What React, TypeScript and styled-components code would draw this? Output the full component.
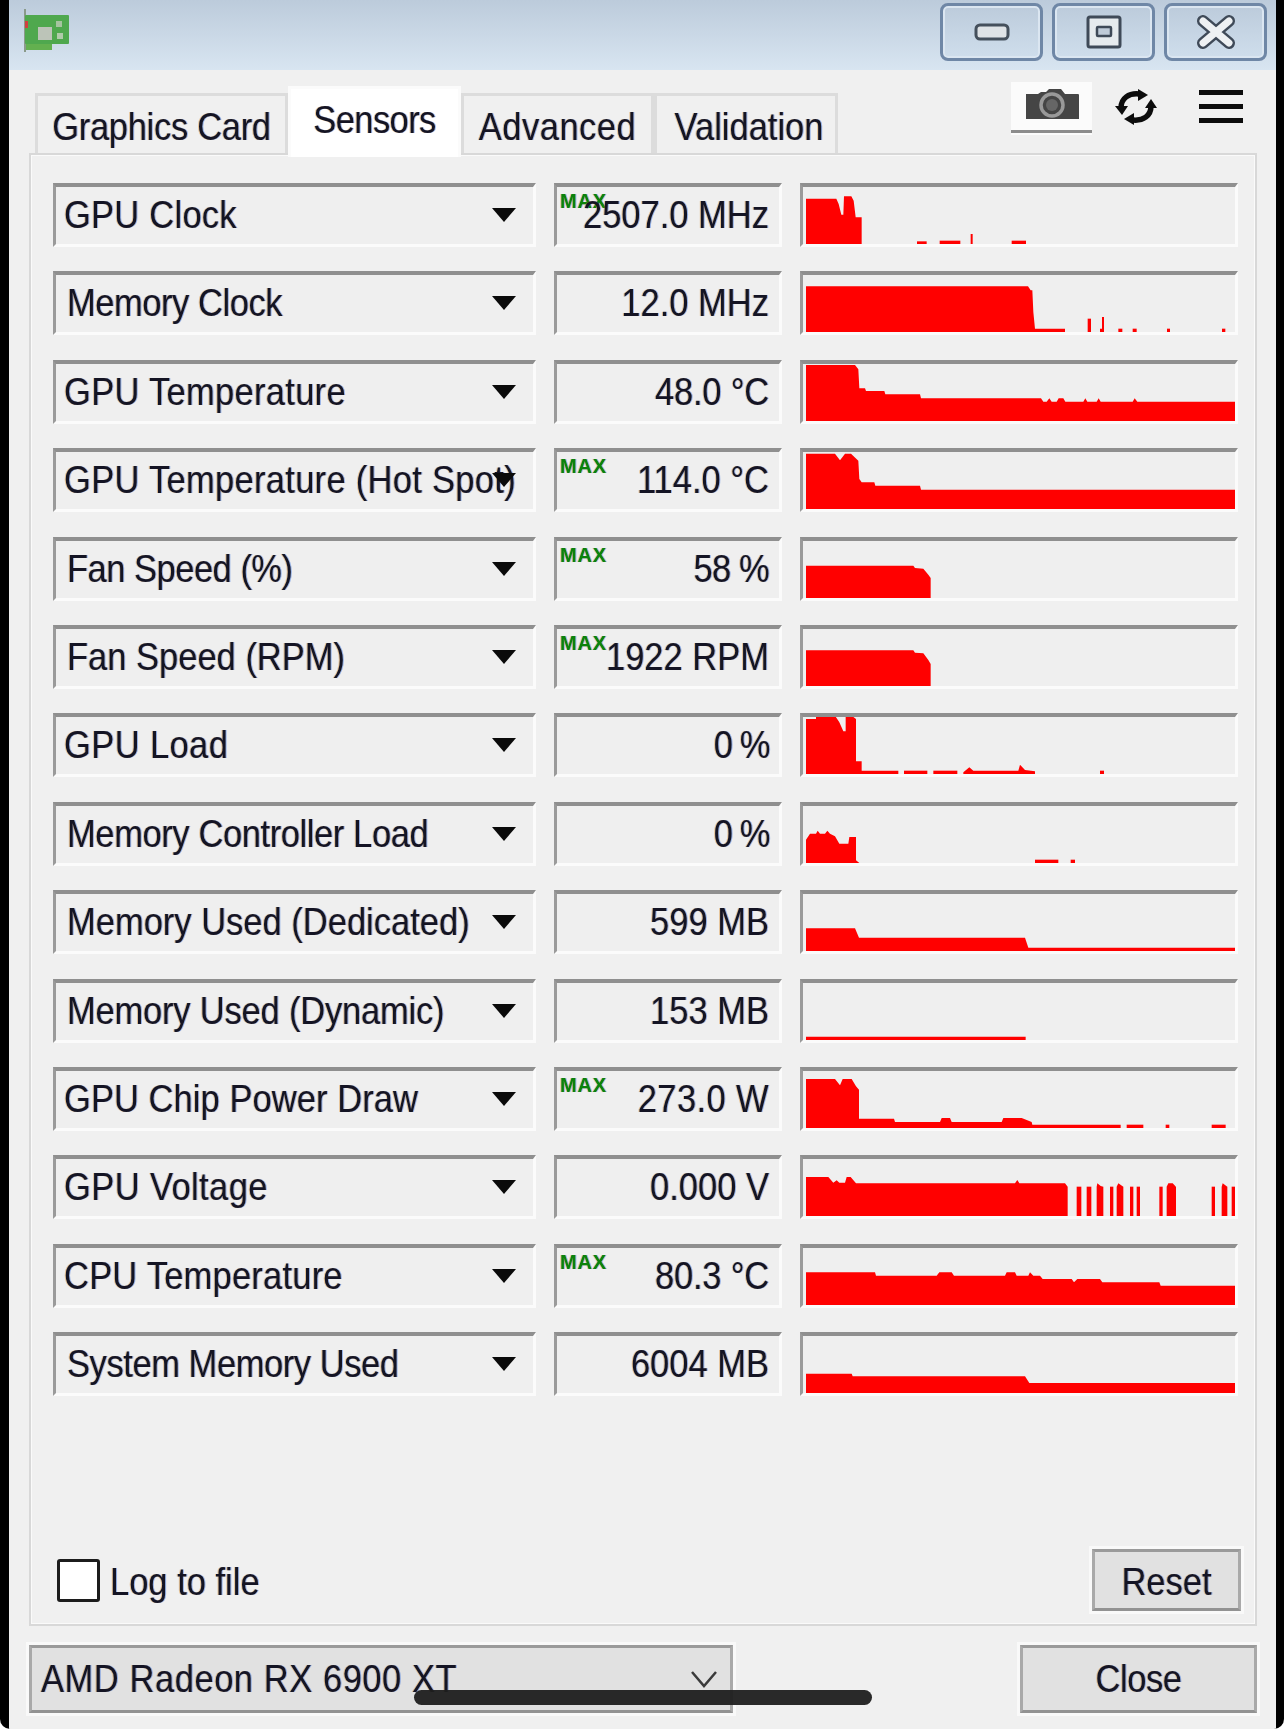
import React from 'react';
import styled, { createGlobalStyle, css } from 'styled-components';

const GlobalStyle = createGlobalStyle`
  html, body {
    margin: 0;
    padding: 0;
    background: #fff;
  }
`;

const uiText = css`
  font-family: "Liberation Sans", Arial, sans-serif;
  font-size: 34.5px;
  color: #141424;
  text-shadow: -1px 0 rgba(215, 130, 20, 0.4), 1px 0 rgba(20, 90, 220, 0.4);
  white-space: nowrap;
`;

const Page = styled.div`
  position: relative;
  height: 1729px;
  display: flex;
  padding: 0 8px 0 9px;
  background: #000;
  border-radius: 0 0 10px 10px;
  overflow: hidden;
`;

const Window = styled.div`
  width: 1267px;
  display: flex;
  flex-direction: column;
  background: #f0f0f0;
  filter: blur(0.7px);
`;

const TitleBar = styled.div`
  height: 70px;
  flex: none;
  display: flex;
  justify-content: space-between;
  align-items: flex-start;
  padding: 3px 9px 0 13px;
  box-sizing: border-box;
  background: linear-gradient(#bccbdb, #d8e5f1);
`;

const AppIcon = styled.svg`
  width: 50px;
  height: 46px;
  margin-top: 5px;
`;

const WindowButtons = styled.div`
  display: flex;
  gap: 9px;
`;

const WindowButton = styled.div`
  width: 103px;
  height: 58px;
  box-sizing: border-box;
  display: flex;
  align-items: center;
  justify-content: center;
  border: 3px solid #6f87a6;
  border-radius: 8px;
  box-shadow: inset 0 0 0 2px #dbe6f1;
  background: linear-gradient(#bccbdb, #cfdeec);
`;

const Body = styled.div`
  flex: 1;
  display: flex;
  flex-direction: column;
  padding: 0 19px 0 20px;
`;

const TabRow = styled.div`
  height: 83px;
  flex: none;
  display: flex;
  align-items: flex-end;
  padding: 0 14px 0 6px;
`;

const Tab = styled.div<{ $active?: boolean; $width: number; $shift?: number }>`
  ${uiText}
  width: ${p => p.$width}px;
  box-sizing: border-box;
  display: flex;
  justify-content: center;
  position: relative;
  border: 3px solid ${p => (p.$active ? '#fbfbfb' : '#dcdcdc')};
  border-bottom: none;
  background: ${p => (p.$active ? '#fff' : '#f0f0f0')};
  height: ${p => (p.$active ? 71 : 60)}px;
  margin-bottom: ${p => (p.$active ? -4 : 0)}px;
  padding-top: ${p => (p.$active ? 12 : 11)}px;
  padding-left: ${p => p.$shift ?? 0}px;
  z-index: ${p => (p.$active ? 2 : 1)};
`;

const TabLabel = styled.span<{ $track?: number }>`
  display: inline-block;
  line-height: 40px;
  letter-spacing: ${p => p.$track ?? 0}px;
  transform: scaleY(1.1);
`;

const Toolbar = styled.div`
  margin-left: auto;
  align-self: flex-start;
  display: flex;
  align-items: flex-start;
  margin-top: 12px;
`;

const CameraButton = styled.div`
  width: 81px;
  height: 51px;
  box-sizing: border-box;
  display: flex;
  align-items: center;
  justify-content: center;
  padding-bottom: 4px;
  background: #fbfbfb;
  border-bottom: 3px solid #8c8c8c;
  box-shadow: 0 2px 0 #fbfbfb;
`;

const RefreshIcon = styled.svg`
  width: 44px;
  height: 36px;
  margin: 7px 0 0 22px;
`;

const MenuIcon = styled.div`
  width: 44px;
  height: 33px;
  margin: 8px 0 0 41px;
  display: flex;
  flex-direction: column;
  justify-content: space-between;
`;

const MenuLine = styled.div`
  height: 5px;
  background: #0c0c0c;
`;

const Panel = styled.div`
  flex: none;
  height: 1473px;
  box-sizing: border-box;
  display: flex;
  flex-direction: column;
  padding: 28px 14px 13px 22px;
  border: 2px solid #d8d8d8;
  box-shadow: inset 0 0 0 1px #fafafa;
`;

const SensorList = styled.div`
  display: flex;
  flex-direction: column;
  gap: 24.4px;
`;

const SensorRow = styled.div`
  display: grid;
  grid-template-columns: 483px 228px 438px;
  column-gap: 18px;
  height: 64px;
`;

const SunkenBox = styled.div`
  position: relative;
  box-sizing: border-box;
  height: 64px;
  border-top: 4px solid #8f8f8f;
  border-left: 3px solid #9a9a9a;
  border-right: 3px solid #fbfbfb;
  border-bottom: 3px solid #fbfbfb;
  background: #efefef;
`;

const SensorSelect = styled(SunkenBox)<{ $inset: number }>`
  ${uiText}
  display: flex;
  align-items: center;
  padding-left: ${p => p.$inset}px;
`;

const ScaledText = styled.span<{ $track?: number }>`
  display: inline-block;
  letter-spacing: ${p => p.$track ?? 0}px;
  transform: scaleY(1.1);
  transform-origin: center;
`;

const LogLabel = styled(ScaledText)`
  margin-top: 4px;
`;

const DropArrow = styled.div`
  position: absolute;
  right: 17px;
  top: 21px;
  width: 0;
  height: 0;
  border-left: 12px solid transparent;
  border-right: 12px solid transparent;
  border-top: 14px solid #0a0a0a;
`;

const ValueBox = styled(SunkenBox)`
  ${uiText}
  display: flex;
  align-items: center;
  justify-content: flex-end;
  padding-right: 10px;
`;

const MaxBadge = styled.span`
  position: absolute;
  left: 3px;
  top: 4px;
  font-family: "Liberation Sans", Arial, sans-serif;
  font-size: 20px;
  font-weight: bold;
  letter-spacing: 0.8px;
  line-height: 20px;
  color: #0b820b;
`;

const GraphBox = styled(SunkenBox)`
  padding-left: 3px;
  overflow: hidden;
`;

const GraphSvg = styled.svg`
  display: block;
  position: absolute;
  left: 3px;
  bottom: 0;
  width: 429px;
  height: 60px;
`;

const PanelFooter = styled.div`
  margin-top: auto;
  display: flex;
  justify-content: space-between;
  align-items: center;
  padding-left: 4px;
`;

const LogOption = styled.label`
  ${uiText}
  display: flex;
  align-items: center;
  gap: 10px;
  padding-top: 1px;
`;

const CheckBox = styled.div`
  width: 43px;
  height: 43px;
  box-sizing: border-box;
  background: #fff;
  border: 3px solid #1c1c1c;
  border-radius: 3px;
`;

const PushButton = styled.div<{ $width: number; $height: number; $textDrop?: number }>`
  ${uiText}
  width: ${p => p.$width}px;
  height: ${p => p.$height}px;
  box-sizing: border-box;
  display: flex;
  align-items: center;
  justify-content: center;
  padding-top: ${p => p.$textDrop ?? 0}px;
  background: #e1e1e1;
  border: 3px solid #a9a9a9;
  border-top-color: #9a9a9a;
  border-bottom-color: #929292;
  box-shadow: 0 0 0 3px #f9f9f9;
`;

const BottomRow = styled.div`
  flex: none;
  display: flex;
  justify-content: space-between;
  margin-top: 19px;
`;

const CardSelect = styled.div`
  ${uiText}
  width: 704px;
  height: 68px;
  box-sizing: border-box;
  display: flex;
  align-items: center;
  justify-content: space-between;
  padding: 0 12px 0 9px;
  background: #e1e1e1;
  border: 3px solid #a9a9a9;
  border-top-color: #9a9a9a;
  border-bottom-color: #929292;
  box-shadow: 0 0 0 3px #f9f9f9;
`;

const HomeIndicator = styled.div`
  position: absolute;
  left: 414px;
  top: 1690px;
  width: 458px;
  height: 15px;
  border-radius: 8px;
  background: rgba(30, 30, 30, 0.95);
`;

// graph shapes: [x, height] pairs traced off the reference at 3x, x starts at 78
type Segment = [number, number][];

const GRAPHS: Record<string, Segment[]> = {
  gpuClock: [
    [[78, 136], [169, 136], [176, 120], [184, 88], [190, 88], [192, 143], [214, 143], [221, 130], [227, 80], [245, 80]],
    [[411, 8], [440, 8]],
    [[479, 10], [541, 10]],
    [[572, 30], [578, 30]],
    [[695, 10], [738, 10]],
  ],
  memClock: [
    [[78, 137], [744, 137], [752, 125], [757, 125], [760, 60], [765, 10], [855, 10]],
    [[923, 40], [933, 40]],
    [[960, 10], [966, 10], [966, 45], [972, 45]],
    [[1015, 10], [1027, 10]],
    [[1058, 10], [1070, 10]],
    [[1161, 10], [1170, 10]],
    [[1326, 10], [1336, 10]],
  ],
  gpuTemp: [
    [[78, 168], [225, 168], [235, 155], [238, 98], [255, 98], [258, 90], [313, 90], [316, 80], [420, 80], [423, 68], [783, 68], [790, 58], [800, 58], [808, 68], [815, 58], [830, 58], [836, 68], [850, 68], [856, 58], [910, 58], [916, 68], [922, 58], [950, 58], [956, 68], [962, 58], [1058, 58], [1064, 68], [1072, 58], [1365, 58]],
  ],
  hotSpot: [
    [[78, 166], [165, 166], [180, 146], [195, 166], [213, 166], [235, 145], [238, 90], [245, 80], [283, 80], [286, 70], [420, 70], [423, 58], [1365, 58]],
  ],
  fanPct: [
    [[78, 97], [400, 97], [405, 90], [430, 88], [445, 70], [452, 60], [452, 0]],
  ],
  fanRpm: [
    [[78, 107], [400, 107], [405, 100], [430, 98], [445, 78], [452, 66], [452, 0]],
  ],
  gpuLoad: [
    [[78, 165], [108, 165], [108, 175], [165, 175], [178, 155], [190, 128], [197, 128], [197, 175], [215, 175], [228, 165], [228, 38], [245, 38], [245, 10], [355, 10]],
    [[372, 10], [442, 10]],
    [[460, 10], [532, 10]],
    [[550, 5], [568, 20], [580, 10], [715, 10], [720, 28], [735, 12], [765, 8]],
    [[960, 10], [972, 10]],
  ],
  memLoad: [
    [[78, 70], [90, 88], [108, 88], [113, 97], [120, 88], [135, 88], [142, 97], [150, 88], [165, 80], [178, 58], [205, 58], [208, 78], [228, 78], [228, 8], [238, 0]],
    [[765, 10], [835, 10]],
    [[872, 10], [885, 10]],
  ],
  memDedicated: [
    [[78, 68], [225, 68], [237, 40], [735, 40], [745, 10], [1365, 10]],
  ],
  memDynamic: [
    [[78, 10], [737, 10]],
  ],
  chipPower: [
    [[78, 147], [165, 147], [180, 128], [188, 147], [215, 147], [228, 125], [237, 115], [237, 28], [342, 28], [345, 18], [480, 18], [485, 30], [510, 30], [515, 18], [665, 18], [670, 30], [725, 30], [755, 18], [757, 10], [1022, 10]],
    [[1040, 10], [1090, 10]],
    [[1157, 10], [1168, 10]],
    [[1295, 10], [1337, 10]],
  ],
  voltage: [
    [[78, 117], [145, 117], [160, 100], [170, 107], [178, 100], [195, 100], [200, 117], [212, 117], [228, 98], [705, 98], [712, 108], [718, 98], [855, 98], [863, 88], [863, 0]],
    [[890, 88], [904, 88]],
    [[920, 88], [934, 88]],
    [[950, 88], [952, 98], [962, 90], [970, 88]],
    [[990, 88], [1000, 88]],
    [[1010, 88], [1015, 98], [1030, 88]],
    [[1050, 88], [1060, 88]],
    [[1070, 88], [1080, 88]],
    [[1138, 88], [1148, 88]],
    [[1160, 88], [1165, 98], [1178, 98], [1188, 88]],
    [[1295, 88], [1305, 88]],
    [[1325, 88], [1328, 98], [1342, 88]],
    [[1355, 88], [1365, 88]],
  ],
  cpuTemp: [
    [[78, 98], [285, 98], [288, 88], [470, 88], [478, 98], [515, 98], [522, 88], [675, 88], [680, 98], [705, 98], [710, 88], [745, 88], [750, 98], [760, 88], [780, 88], [788, 78], [875, 78], [882, 68], [892, 78], [960, 78], [967, 68], [1138, 68], [1142, 58], [1365, 58]],
  ],
  sysMem: [
    [[78, 58], [215, 58], [218, 50], [735, 50], [748, 30], [1365, 30]],
  ],
};

const SENSORS = [
  { name: 'GPU Clock', inset: 8, track: 0.25, value: '2507.0 MHz', valueTrack: 0, max: true, graph: 'gpuClock' },
  { name: 'Memory Clock', inset: 11, track: -0.45, value: '12.0 MHz', valueTrack: 0, max: false, graph: 'memClock' },
  { name: 'GPU Temperature', inset: 8, track: 0.3, value: '48.0 °C', valueTrack: -0.2, max: false, graph: 'gpuTemp' },
  { name: 'GPU Temperature (Hot Spot)', inset: 8, track: 0.3, value: '114.0 °C', valueTrack: 0, max: true, graph: 'hotSpot' },
  { name: 'Fan Speed (%)', inset: 11, track: -0.5, value: '58 %', valueTrack: -0.8, max: true, graph: 'fanPct' },
  { name: 'Fan Speed (RPM)', inset: 11, track: 0, value: '1922 RPM', valueTrack: 0, max: true, graph: 'fanRpm' },
  { name: 'GPU Load', inset: 8, track: 0.4, value: '0 %', valueTrack: -1.4, max: false, graph: 'gpuLoad' },
  { name: 'Memory Controller Load', inset: 11, track: -0.4, value: '0 %', valueTrack: -1.4, max: false, graph: 'memLoad' },
  { name: 'Memory Used (Dedicated)', inset: 11, track: 0, value: '599 MB', valueTrack: 0, max: false, graph: 'memDedicated' },
  { name: 'Memory Used (Dynamic)', inset: 11, track: -0.2, value: '153 MB', valueTrack: 0, max: false, graph: 'memDynamic' },
  { name: 'GPU Chip Power Draw', inset: 8, track: 0.06, value: '273.0 W', valueTrack: 0.4, max: true, graph: 'chipPower' },
  { name: 'GPU Voltage', inset: 8, track: 0.4, value: '0.000 V', valueTrack: 0, max: false, graph: 'voltage' },
  { name: 'CPU Temperature', inset: 8, track: 0.22, value: '80.3 °C', valueTrack: -0.2, max: true, graph: 'cpuTemp' },
  { name: 'System Memory Used', inset: 11, track: -0.43, value: '6004 MB', valueTrack: 0, max: false, graph: 'sysMem' },
];

const segmentPath = (seg: Segment) => {
  const first = seg[0];
  const last = seg[seg.length - 1];
  const line = seg.map(([x, h]) => `L${x} ${180 - h}`).join(' ');
  return `M${first[0]} 180 ${line} L${last[0]} 180 Z`;
};

const SensorGraph: React.FC<{ name: string }> = ({ name }) => (
  <GraphSvg viewBox="78 0 1287 180" preserveAspectRatio="none">
    {GRAPHS[name].map((seg, i) => (
      <path key={i} d={segmentPath(seg)} fill="#ff0000" />
    ))}
  </GraphSvg>
);

const App: React.FC = () => (
  <>
    <GlobalStyle />
    <Page>
      <Window>
        <TitleBar>
          <AppIcon viewBox="0 0 50 46">
            <path d="M3 1v43" stroke="#8a9a8a" strokeWidth="2" />
            <rect x="3" y="7" width="44" height="29" rx="1" fill="#4fa84e" />
            <rect x="4" y="36" width="26" height="6" fill="#63b04f" />
            <rect x="3" y="13" width="3" height="7" fill="#d04040" />
            <rect x="16" y="19" width="14" height="13" fill="#bcc4b8" />
            <rect x="34" y="13" width="6" height="6" fill="#a6c4a0" />
            <rect x="35" y="25" width="6" height="6" fill="#b0cbaa" />
          </AppIcon>
          <WindowButtons>
            <WindowButton>
              <svg width="36" height="18" viewBox="0 0 36 18">
                <rect x="2" y="2" width="32" height="14" rx="4" fill="#dfe3e6" stroke="#45505c" strokeWidth="3" />
              </svg>
            </WindowButton>
            <WindowButton>
              <svg width="36" height="36" viewBox="0 0 36 36">
                <rect x="2" y="3" width="32" height="30" rx="2" fill="#e6ebee" stroke="#3f4a58" strokeWidth="3" />
                <rect x="11" y="13" width="14" height="9" rx="1" fill="#bfcbd8" stroke="#3f4a58" strokeWidth="2.5" />
              </svg>
            </WindowButton>
            <WindowButton>
              <svg width="40" height="34" viewBox="0 0 40 34">
                <path d="M7 6L33 28M33 6L7 28" stroke="#3f4a58" strokeWidth="12" strokeLinecap="round" />
                <path d="M7 6L33 28M33 6L7 28" stroke="#eef1f3" strokeWidth="7" strokeLinecap="round" />
              </svg>
            </WindowButton>
          </WindowButtons>
        </TitleBar>
        <Body>
          <TabRow>
            <Tab $width={253}><TabLabel $track={-0.3}>Graphics Card</TabLabel></Tab>
            <Tab $width={173} $active><TabLabel $track={-0.6}>Sensors</TabLabel></Tab>
            <Tab $width={193}><TabLabel $track={0.5}>Advanced</TabLabel></Tab>
            <Tab $width={184} $shift={6}><TabLabel>Validation</TabLabel></Tab>
            <Toolbar>
              <CameraButton>
                <svg width="54" height="32" viewBox="0 0 54 32">
                  <path d="M1 6h12l3-2h5l3-3h12l4 5h13c1 0 1 1 1 1v24H1z" fill="#454545" />
                  <circle cx="27" cy="17" r="11" fill="none" stroke="#999" strokeWidth="3.5" />
                  <circle cx="27" cy="17" r="6" fill="#666" />
                </svg>
              </CameraButton>
              <RefreshIcon viewBox="0 0 44 36">
                <path d="M7 19C7 9 15 4 25 5" fill="none" stroke="#0c0c0c" strokeWidth="5.5" />
                <path d="M37 17C37 27 29 32 19 31" fill="none" stroke="#0c0c0c" strokeWidth="5.5" />
                <path d="M24 0L34 6L24 12z" fill="#0c0c0c" />
                <path d="M20 24L10 30L20 36z" fill="#0c0c0c" />
                <path d="M1 17L8 26L14 17z" fill="#0c0c0c" />
                <path d="M31 19L37 10L43 19z" fill="#0c0c0c" />
              </RefreshIcon>
              <MenuIcon>
                <MenuLine />
                <MenuLine />
                <MenuLine />
              </MenuIcon>
            </Toolbar>
          </TabRow>
          <Panel>
            <SensorList>
              {SENSORS.map(s => (
                <SensorRow key={s.name}>
                  <SensorSelect $inset={s.inset}>
                    <ScaledText $track={s.track}>{s.name}</ScaledText>
                    <DropArrow />
                  </SensorSelect>
                  <ValueBox>
                    {s.max && <MaxBadge>MAX</MaxBadge>}
                    <ScaledText $track={s.valueTrack}>{s.value}</ScaledText>
                  </ValueBox>
                  <GraphBox>
                    <SensorGraph name={s.graph} />
                  </GraphBox>
                </SensorRow>
              ))}
            </SensorList>
            <PanelFooter>
              <LogOption>
                <CheckBox />
                <LogLabel>Log to file</LogLabel>
              </LogOption>
              <PushButton $width={149} $height={62} $textDrop={4}>
                <ScaledText>Reset</ScaledText>
              </PushButton>
            </PanelFooter>
          </Panel>
          <BottomRow>
            <CardSelect>
              <ScaledText $track={0.55}>AMD Radeon RX 6900 XT</ScaledText>
              <svg width="28" height="18" viewBox="0 0 28 18">
                <path d="M2 2L14 16L26 2" fill="none" stroke="#3a3a3a" strokeWidth="2.5" />
              </svg>
            </CardSelect>
            <PushButton $width={237} $height={68}>
              <ScaledText $track={-0.4}>Close</ScaledText>
            </PushButton>
          </BottomRow>
        </Body>
      </Window>
      <HomeIndicator />
    </Page>
  </>
);

export default App;
